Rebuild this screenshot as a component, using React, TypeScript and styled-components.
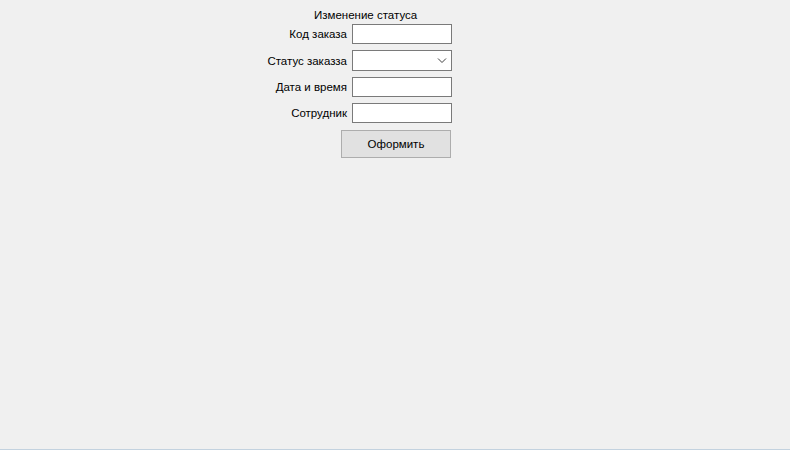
import styled, { createGlobalStyle } from "styled-components";

const GlobalStyle = createGlobalStyle`
    html, body {
        margin: 0;
        padding: 0;
        background: #f0f0f0;
    }
    body {
        font-family: "Liberation Sans", Arial, sans-serif;
        font-size: 11.5px;
        color: #000;
    }
`;

const Window = styled.div`
    position: relative;
    width: 790px;
    height: 450px;
    box-sizing: border-box;
    background: #f0f0f0;
    border-bottom: 1px solid #c3d2df;
    overflow: hidden;
`;

const Title = styled.div`
    padding: 6px 0 0 314px;
    height: 18px;
    line-height: 18px;
`;

const Form = styled.div`
    display: flex;
    flex-direction: column;
    width: 452px;
`;

const Row = styled.div<{ $gap: number }>`
    display: flex;
    justify-content: flex-end;
    align-items: center;
    gap: 5px;
    margin-top: ${(p) => p.$gap}px;
`;

const Label = styled.label`
    white-space: nowrap;
    line-height: 16px;
`;

const Field = styled.div<{ $h: number }>`
    position: relative;
    width: 100px;
    height: ${(p) => p.$h}px;
    box-sizing: border-box;
    background: #fff;
    border: 1px solid #7a7a7a;
`;

const Chevron = styled.svg`
    position: absolute;
    right: 4px;
    top: 6px;
`;

const ButtonRow = styled.div`
    display: flex;
    justify-content: flex-end;
    margin-top: 7px;
    padding-right: 1px;
`;

const Button = styled.button`
    width: 110px;
    height: 28px;
    box-sizing: border-box;
    background: #e1e1e1;
    border: 1px solid #adadad;
    font-family: inherit;
    font-size: 11.5px;
    color: #000;
    padding: 0;
`;

const rows = [
    { label: "Код заказа", h: 20, gap: 0, select: false },
    { label: "Статус заказза", h: 21, gap: 6, select: true },
    { label: "Дата и время", h: 20, gap: 6, select: false },
    { label: "Сотрудник", h: 20, gap: 6, select: false },
];

const App = () => {
    return (
        <>
            <GlobalStyle />
            <Window>
                <Title>Изменение статуса</Title>
                <Form>
                    {rows.map((r) => (
                        <Row key={r.label} $gap={r.gap}>
                            <Label>{r.label}</Label>
                            <Field $h={r.h}>
                                {r.select && (
                                    <Chevron width="10" height="7" viewBox="0 0 10 7">
                                        <path d="M1 1.5 L5 5.5 L9 1.5" fill="none" stroke="#404040" strokeWidth="1" />
                                    </Chevron>
                                )}
                            </Field>
                        </Row>
                    ))}
                    <ButtonRow>
                        <Button>Оформить</Button>
                    </ButtonRow>
                </Form>
            </Window>
        </>
    );
};

export default App;
